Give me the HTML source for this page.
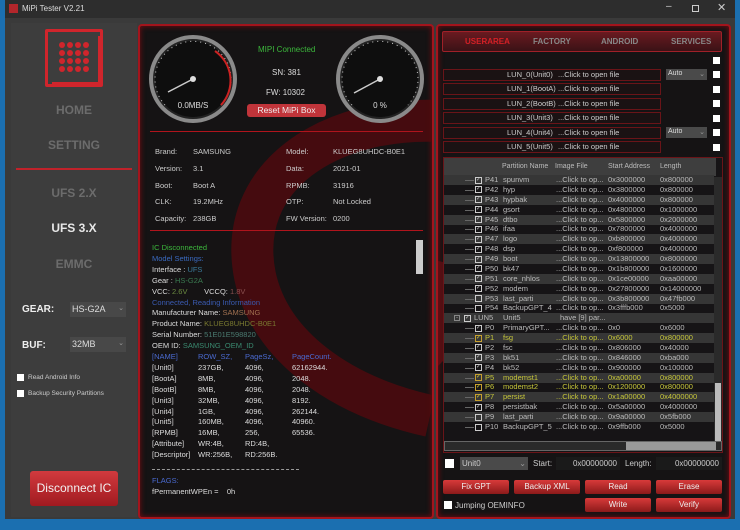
<!DOCTYPE html>
<html><head><meta charset="utf-8"><style>
*{margin:0;padding:0;box-sizing:border-box}
body{width:740px;height:530px;overflow:hidden;background:#1b6fb0;font-family:"Liberation Sans",sans-serif;position:relative;color:#ddd}
.a{position:absolute;white-space:nowrap}
#win{position:absolute;left:5px;top:0;width:730px;height:519px;background:#3a3a3a}
#title{position:absolute;left:5px;top:0;width:730px;height:18px;background:#2d2d2d}
#side{position:absolute;left:11px;top:23px;width:126px;height:494px;background:#3d3d3d}
.panel{position:absolute;border:2px solid #a3141c;border-radius:4px;background:#151314;box-shadow:0 0 6px #7a0c12 inset;overflow:hidden}
.nav{position:absolute;left:11px;width:126px;text-align:center;font-weight:bold;font-size:12px;color:#6c6c6c}
.lf{font-size:7.5px}
.cb{position:absolute;width:9px;height:9px;background:#fff}
.btn{position:absolute;height:14px;background:linear-gradient(#d83a3a,#8c1a1a);border-radius:2px;color:#eee;font-size:8px;text-align:center;line-height:14px}
.lun{position:absolute;left:443px;width:218px;height:12px;border:1px solid #6a1418;background:#1a1213;font-size:7.5px;color:#ccc;line-height:10px}
.row{position:absolute;left:444px;width:270px;height:10px;font-size:7.5px;line-height:10px;color:#ccc}
.row span{position:absolute}
.ck{position:absolute;width:7px;height:7px;border:1px solid #ccc;top:1.5px;font-size:6px;line-height:5px;text-align:center}
</style></head><body>
<div id="win"></div>
<div id="title"></div>
<div class="a" style="left:9px;top:4px;width:9px;height:9px;background:#b3262b"></div>
<div class="a" style="left:22px;top:4px;font-size:8px;color:#ddd">MiPi Tester V2.21</div>
<div class="a" style="left:666px;top:1px;font-size:10px;color:#ccc">–</div>
<div class="a" style="left:692px;top:5px;width:7px;height:7px;border:1px solid #ccc"></div>
<div class="a" style="left:717px;top:1px;font-size:11px;color:#ccc">✕</div>

<div id="side"></div>
<div class="a" style="left:45px;top:29px;width:58px;height:58px;border:3px solid #d0252c;background:#3d3d3d;border-radius:2px"></div>
<div class="a" style="left:52px;top:36px;width:50px;height:50px;border-right:4px solid #d0252c;border-bottom:4px solid #d0252c"></div>
<svg class="a" style="left:56px;top:40px" width="36" height="36"><g fill="#d0252c">
<circle cx="6" cy="5" r="3"/><circle cx="14" cy="5" r="3"/><circle cx="22" cy="5" r="3"/><circle cx="30" cy="5" r="3"/>
<circle cx="6" cy="13" r="3"/><circle cx="14" cy="13" r="3"/><circle cx="22" cy="13" r="3"/><circle cx="30" cy="13" r="3"/>
<circle cx="6" cy="21" r="3"/><circle cx="14" cy="21" r="3"/><circle cx="22" cy="21" r="3"/><circle cx="30" cy="21" r="3"/>
<circle cx="6" cy="29" r="3"/><circle cx="14" cy="29" r="3"/><circle cx="22" cy="29" r="3"/><circle cx="30" cy="29" r="3"/></g></svg>
<div class="nav" style="top:103px">HOME</div>
<div class="nav" style="top:138px">SETTING</div>
<div class="a" style="left:16px;top:168px;width:116px;height:2px;background:#c0222a"></div>
<div class="nav" style="top:186px">UFS 2.X</div>
<div class="nav" style="top:221px;color:#e8e8e8">UFS 3.X</div>
<div class="nav" style="top:257px">EMMC</div>
<div class="a" style="left:22px;top:304px;font-size:10px;font-weight:bold;color:#eee">GEAR:</div>
<div class="a" style="left:70px;top:302px;width:56px;height:15px;background:#484848;font-size:9px;color:#ddd;padding:2px 2px">HS-G2A<span style="float:right;font-size:7px;color:#999">⌄</span></div>
<div class="a" style="left:22px;top:340px;font-size:10px;font-weight:bold;color:#eee">BUF:</div>
<div class="a" style="left:70px;top:337px;width:56px;height:15px;background:#484848;font-size:9px;color:#ddd;padding:2px 2px">32MB<span style="float:right;font-size:7px;color:#999">⌄</span></div>
<div class="cb" style="left:17px;top:374px;width:7px;height:7px"></div>
<div class="a" style="left:28px;top:374px;font-size:6.5px;color:#ccc">Read Android Info</div>
<div class="cb" style="left:17px;top:390px;width:7px;height:7px"></div>
<div class="a" style="left:28px;top:390px;font-size:6.5px;color:#ccc">Backup Security Partitions</div>
<div class="a" style="left:30px;top:471px;width:88px;height:35px;background:linear-gradient(#d23a3e,#a01a20);border-radius:3px;color:#f2f2f2;font-size:12px;text-align:center;line-height:35px">Disconnect IC</div>

<!-- middle panel -->
<div class="panel" style="left:138px;top:24px;width:296px;height:495px">
<svg class="a" style="left:0;top:0" width="296" height="495"><path d="M300 95 C190 90 95 150 115 250 C130 320 200 370 290 390" stroke="#4e0a0e" stroke-width="42" fill="none" opacity=".85"/></svg>
</div>
<svg class="a" style="left:148px;top:34px" width="285" height="90">
<g transform="translate(45,45)"><circle r="42" fill="#222" stroke="#8a8a8a" stroke-width="4"/><circle r="38" fill="#0e0e0e"/>
<path d="M-28 26 A38 38 0 1 1 28 26" stroke="#ccc" stroke-width="1" fill="none" stroke-dasharray="1 4"/>
<path d="M22 -28 A36 36 0 0 1 28 26" stroke="#c22" stroke-width="2" fill="none"/>
<line x1="0" y1="0" x2="-25" y2="13" stroke="#ccc" stroke-width="1.5"/><circle r="3" fill="#ddd"/>
<text x="0" y="29" fill="#ddd" font-size="8" text-anchor="middle">0.0MB/S</text></g>
<g transform="translate(232,45)"><circle r="42" fill="#222" stroke="#8a8a8a" stroke-width="4"/><circle r="38" fill="#0e0e0e"/>
<path d="M-28 26 A38 38 0 1 1 28 26" stroke="#ccc" stroke-width="1" fill="none" stroke-dasharray="1 4"/>
<line x1="0" y1="0" x2="-26" y2="14" stroke="#ccc" stroke-width="1.5"/><circle r="3" fill="#ddd"/>
<text x="0" y="29" fill="#ddd" font-size="8" text-anchor="middle">0 %</text></g></svg>
<div class="a" style="left:258px;top:45px;font-size:8px;color:#3cb83c">MIPI Connected</div>
<div class="a" style="left:272px;top:68px;font-size:8px;color:#ddd">SN: 381</div>
<div class="a" style="left:266px;top:88px;font-size:8px;color:#ddd">FW: 10302</div>
<div class="a" style="left:247px;top:104px;width:79px;height:13px;background:#c0343a;border-radius:3px;font-size:8.5px;color:#eee;text-align:center;line-height:13px">Reset MiPi Box</div>
<div class="a" style="left:150px;top:131px;width:273px;height:1px;background:#b0141c"></div>
<div class="a" style="left:150px;top:230px;width:273px;height:1px;background:#b0141c"></div>
<div class="a lf" style="left:155px;top:144px;line-height:16.8px;color:#ccc">Brand:<br>Version:<br>Boot:<br>CLK:<br>Capacity:</div>
<div class="a lf" style="left:193px;top:144px;line-height:16.8px;color:#ccc">SAMSUNG<br>3.1<br>Boot A<br>19.2MHz<br>238GB</div>
<div class="a lf" style="left:286px;top:144px;line-height:16.8px;color:#ccc">Model:<br>Data:<br>RPMB:<br>OTP:<br>FW Version:</div>
<div class="a lf" style="left:333px;top:144px;line-height:16.8px;color:#ccc">KLUEG8UHDC-B0E1<br>2021-01<br>31916<br>Not Locked<br>0200</div>
<div class="a" style="left:416px;top:240px;width:7px;height:34px;background:#ccc"></div>
<div class="a lf" style="left:152px;top:243px;line-height:10.9px;color:#ddd">
<span style="color:#3cb83c">IC Disconnected</span><br>
<span style="color:#3a6ac0">Model Settings:</span><br>
Interface : <span style="color:#3a7a9a">UFS</span><br>
Gear : <span style="color:#3a7a50">HS-G2A</span><br>
VCC: <span style="color:#6a8a40">2.6V</span> &nbsp; &nbsp; &nbsp; &nbsp;VCCQ: <span style="color:#8a5050">1.8V</span><br>
<span style="color:#3a5ab0">Connected, Reading Information</span><br>
Manufacturer Name: <span style="color:#a07050">SAMSUNG</span><br>
Product Name: <span style="color:#7a7a30">KLUEG8UHDC-B0E1</span><br>
Serial Number: <span style="color:#4a7a70">51E01E598820</span><br>
OEM ID: <span style="color:#3a8a70">SAMSUNG_OEM_ID</span></div>
<div class="a lf" style="left:152px;top:352px;line-height:10.9px;color:#ddd"><span style="color:#4a6ad0">[NAME]</span><br>[Unit0]<br>[BootA]<br>[BootB]<br>[Unit3]<br>[Unit4]<br>[Unit5]<br>[RPMB]<br>[Attribute]<br>[Descriptor]</div>
<div class="a lf" style="left:198px;top:352px;line-height:10.9px;color:#ddd"><span style="color:#4a6ad0">ROW_SZ,</span><br>237GB,<br>8MB,<br>8MB,<br>32MB,<br>1GB,<br>160MB,<br>16MB,<br>WR:4B,<br>WR:256B,</div>
<div class="a lf" style="left:245px;top:352px;line-height:10.9px;color:#ddd"><span style="color:#4a6ad0">PageSz,</span><br>4096,<br>4096,<br>4096,<br>4096,<br>4096,<br>4096,<br>256,<br>RD:4B,<br>RD:256B.</div>
<div class="a lf" style="left:292px;top:352px;line-height:10.9px;color:#ddd"><span style="color:#4a6ad0">PageCount.</span><br>62162944.<br>2048.<br>2048.<br>8192.<br>262144.<br>40960.<br>65536.</div>
<div class="a" style="left:152px;top:469px;width:147px;border-top:1px dashed #999"></div>
<div class="a lf" style="left:152px;top:476px;color:#4a6ad0">FLAGS:</div>
<div class="a lf" style="left:152px;top:487px;color:#ddd">fPermanentWPEn = &nbsp; &nbsp;0h</div>

<!-- right panel -->
<div class="panel" style="left:436px;top:24px;width:295px;height:495px">
<svg class="a" style="left:0;top:0" width="295" height="495"><path d="M0 235 C30 240 45 260 40 300 L0 340Z" fill="#6a0e14" opacity=".7"/></svg>
</div>
<div class="a" style="left:442px;top:31px;width:280px;height:21px;background:linear-gradient(#6a1a20,#3a1216);border:1px solid #a02028;border-radius:2px;font-size:8px;font-weight:bold;color:#888;line-height:20px">
<span class="a" style="left:22px;color:#d42026">USERAREA</span><span class="a" style="left:90px">FACTORY</span><span class="a" style="left:158px">ANDROID</span><span class="a" style="left:228px">SERVICES</span></div>
<div class="cb" style="left:713px;top:57px;width:7px;height:7px"></div>
<div class="lun" style="top:69px"><span class="a" style="left:63px">LUN_0(Unit0)</span><span class="a" style="left:114px">...Click to open file</span></div>
<div class="lun" style="top:83px"><span class="a" style="left:63px">LUN_1(BootA)</span><span class="a" style="left:114px">...Click to open file</span></div>
<div class="lun" style="top:98px"><span class="a" style="left:63px">LUN_2(BootB)</span><span class="a" style="left:114px">...Click to open file</span></div>
<div class="lun" style="top:112px"><span class="a" style="left:63px">LUN_3(Unit3)</span><span class="a" style="left:114px">...Click to open file</span></div>
<div class="lun" style="top:127px"><span class="a" style="left:63px">LUN_4(Unit4)</span><span class="a" style="left:114px">...Click to open file</span></div>
<div class="lun" style="top:141px"><span class="a" style="left:63px">LUN_5(Unit5)</span><span class="a" style="left:114px">...Click to open file</span></div>
<div class="a" style="left:666px;top:69px;width:41px;height:11px;background:#4a4a4a;font-size:7px;color:#ddd;padding:1px 2px">Auto<span style="float:right;color:#999">⌄</span></div>
<div class="a" style="left:666px;top:127px;width:41px;height:11px;background:#4a4a4a;font-size:7px;color:#ddd;padding:1px 2px">Auto<span style="float:right;color:#999">⌄</span></div>
<div class="cb" style="left:713px;top:71px;width:7px;height:7px"></div>
<div class="cb" style="left:713px;top:86px;width:7px;height:7px"></div>
<div class="cb" style="left:713px;top:100px;width:7px;height:7px"></div>
<div class="cb" style="left:713px;top:115px;width:7px;height:7px"></div>
<div class="cb" style="left:713px;top:129px;width:7px;height:7px"></div>
<div class="cb" style="left:713px;top:144px;width:7px;height:7px"></div>

<div class="a" style="left:443px;top:157px;width:280px;height:296px;border:1px solid #6a1418;background:#161416"></div>
<div class="a" style="left:444px;top:158px;width:272px;height:18px;background:#3e3e3e;font-size:7px;color:#bbb;line-height:18px">
<span class="a" style="left:58px">Partition Name</span><span class="a" style="left:111px">Image File</span><span class="a" style="left:164px">Start Address</span><span class="a" style="left:216px">Length</span></div>
<div class="a" style="left:714px;top:177px;width:8px;height:264px;background:#2a2a2a"></div>
<div class="a" style="left:715px;top:383px;width:6px;height:58px;background:#bbb"></div>
<div class="a" style="left:444px;top:441px;width:278px;height:10px;background:#2a2a2a;border:1px solid #666"></div>
<div class="a" style="left:626px;top:442px;width:90px;height:8px;background:#9a9a9a"></div>

<div id="rows"></div>
<script>
var d=[["P41","spunvm","0x3000000","0x800000",1],["P42","hyp","0x3800000","0x800000",1],["P43","hypbak","0x4000000","0x800000",1],["P44","gsort","0x4800000","0x1000000",1],["P45","dtbo","0x5800000","0x2000000",1],["P46","ifaa","0x7800000","0x4000000",1],["P47","logo","0xb800000","0x4000000",1],["P48","dsp","0xf800000","0x4000000",1],["P49","boot","0x13800000","0x8000000",1],["P50","bk47","0x1b800000","0x1600000",1],["P51","core_nhlos","0x1ce00000","0xaa00000",1],["P52","modem","0x27800000","0x14000000",1],["P53","last_parti","0x3b800000","0x47fb000",0],["P54","BackupGPT_4","0x3fffb000","0x5000",0],["LUN5","Unit5","","",1],["P0","PrimaryGPT...","0x0","0x6000",1],["P1","fsg","0x6000","0x800000",2],["P2","fsc","0x806000","0x40000",1],["P3","bk51","0x846000","0xba000",1],["P4","bk52","0x900000","0x100000",1],["P5","modemst1","0xa00000","0x800000",2],["P6","modemst2","0x1200000","0x800000",2],["P7","persist","0x1a00000","0x4000000",2],["P8","persistbak","0x5a00000","0x4000000",1],["P9","last_parti","0x9a00000","0x5fb000",0],["P10","BackupGPT_5","0x9ffb000","0x5000",0]];
var h="";d.forEach(function(r,i){var y=175+i*9.88,bg=i%2==0?"#363636":"transparent",c=r[4]==2?"#c8c83a":"#bbb";
var lun=r[0]=="LUN5";var cx=lun?20:31;
h+='<div class="row" style="top:'+y+'px;background:'+bg+';color:'+c+'">'+
(lun?'':'<span style="left:21px;top:5px;width:9px;border-top:1px solid #666"></span>')+
(lun?'<span style="left:10px;top:2px;width:6px;height:6px;border:1px solid #888;font-size:6px;line-height:4px;text-align:center;color:#aaa">-</span>':'')+
'<span class="ck" style="left:'+cx+'px;border-color:'+(r[4]==2?'#c8a030':'#ccc')+'">'+(r[4]?'✓':'')+'</span>'+
'<span style="left:'+(cx+10)+'px">'+r[0]+'</span><span style="left:59px">'+r[1]+'</span>'+
'<span style="left:'+(lun?116:112)+'px">'+(lun?'have [9] par...':'...Click to op...')+'</span>'+
'<span style="left:164px">'+r[2]+'</span><span style="left:216px">'+r[3]+'</span></div>';});
document.getElementById("rows").innerHTML=h;
</script>

<div class="cb" style="left:445px;top:459px"></div>
<div class="a" style="left:460px;top:457px;width:68px;height:13px;background:#4a4a4a;font-size:8px;color:#ccc;padding:2px">Unit0<span style="float:right;color:#999">⌄</span></div>
<div class="a" style="left:533px;top:459px;font-size:8px;color:#ccc">Start:</div>
<div class="a" style="left:556px;top:457px;width:64px;height:13px;background:#1a1a1a;font-size:8px;color:#ccc;text-align:right;padding:2px 3px">0x00000000</div>
<div class="a" style="left:625px;top:459px;font-size:8px;color:#ccc">Length:</div>
<div class="a" style="left:656px;top:457px;width:66px;height:13px;background:#1a1a1a;font-size:8px;color:#ccc;text-align:right;padding:2px 3px">0x00000000</div>
<div class="btn" style="left:443px;top:480px;width:66px">Fix GPT</div>
<div class="btn" style="left:514px;top:480px;width:66px">Backup XML</div>
<div class="btn" style="left:585px;top:480px;width:66px">Read</div>
<div class="btn" style="left:656px;top:480px;width:66px">Erase</div>
<div class="btn" style="left:585px;top:498px;width:66px">Write</div>
<div class="btn" style="left:656px;top:498px;width:66px">Verify</div>
<div class="cb" style="left:444px;top:501px;width:8px;height:8px"></div>
<div class="a" style="left:455px;top:501px;font-size:8px;color:#ccc">Jumping OEMINFO</div>
</body></html>
